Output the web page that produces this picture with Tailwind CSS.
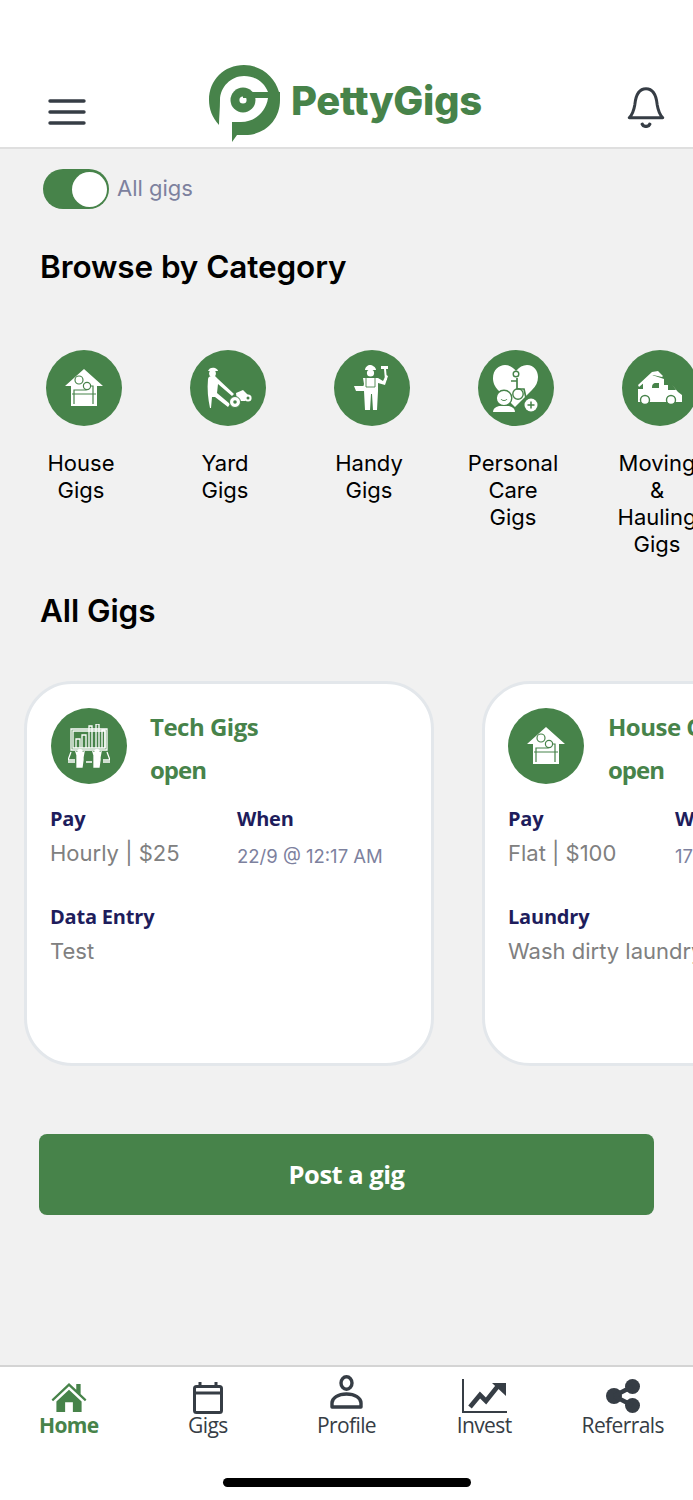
<!DOCTYPE html>
<html lang="en">
<head>
    <meta charset="UTF-8">
    <meta name="viewport" content="width=device-width, initial-scale=1.0">
    <title>PettyGigs</title>
    <script src="https://cdn.jsdelivr.net/npm/@tailwindcss/browser@4"></script>
</head>
<body class="bg-[#f1f1f1] font-['Inter',sans-serif]">
<div class="w-[693px] h-[1500px] flex flex-col overflow-hidden">

    <!-- Header -->
    <header class="h-[149px] shrink-0 bg-white border-b-2 border-[#dfdfdf] flex items-end pl-[48px] pb-[5px]">
        <svg class="w-[38px] h-[26px] mb-[17px]" viewBox="0 0 38 26" fill="none" stroke="#363d45" stroke-width="3.4" stroke-linecap="round"><path d="M2 2h34M2 13h34M2 24h34"/></svg>
        <div class="flex items-center ml-[123px] mb-0">
            <svg class="w-[71px] h-[77px]" viewBox="0 0 71 77">
                <path d="M10 60C3 52 0 44 0 35 0 15 15 0 35 0c17 0 31 12 35 27H59C55 17 46 11 35 11 22 11 11 22 11 35c0 9-1 17-1 25z" fill="#47834a"/>
                <circle cx="34" cy="35" r="12.500" fill="#47834a"/>
                <circle cx="34" cy="35" r="3.600" fill="#fff"/>
                <path d="M34 27h37v6H34z" fill="#47834a"/>
                <path d="M23 77V57h9c14 0 25-10 27-24h12v2c0 20-15 35-35 35h-8z" fill="#47834a"/>
            </svg>
            <span class="ml-[11px] font-extrabold text-[40px] leading-none tracking-[-0.4px] text-[#47834a] -mt-[5px]">PettyGigs</span>
        </div>
        <svg class="w-[38px] h-[41px] ml-[145px] mb-[14px]" viewBox="0 0 40 44" fill="none" stroke="#363d45" stroke-width="3.200" stroke-linejoin="round" stroke-linecap="round">
            <path d="M2 33h36c-4-4-5-8-6-14C31 9 28 2 20 2S9 9 8 19c-1 6-2 10-6 14z"/>
            <path d="M16 40c1 3 7 3 8 0" stroke-width="3.600"/>
        </svg>
    </header>

    <!-- All gigs toggle -->
    <div class="flex items-center gap-[8px] pl-[43px] pt-[20px] h-[60px]">
        <div class="w-[66px] h-[40px] rounded-full bg-[#47834a] flex items-center justify-end pr-[2px]">
            <div class="w-[35px] h-[35px] rounded-full bg-white"></div>
        </div>
        <span class="text-[22px] leading-none text-[#7d819e] -mt-[3px]">All gigs</span>
    </div>

    <h2 class="pl-[40px] mt-[40px] text-[31.5px] leading-[36px] font-semibold text-black tracking-[-0.1px]">Browse by Category</h2>

    <!-- Categories -->
    <div class="flex mt-[65px] pl-[19px] h-[218px] overflow-hidden">
        <div class="w-[144px] shrink-0 flex flex-col">
            <div class="w-[76px] h-[76px] ml-[27px] rounded-full bg-[#47834a] flex items-center justify-center">
                <svg class="w-[40px] h-[40px]" viewBox="0 0 40 40"><path d="M20 1 1 18h6v20h26V18h6z" fill="#fff"/><path d="M8 26h24M10 36V22h12v-4h7v18" fill="none" stroke="#47834a" stroke-width="1.200"/><circle cx="15" cy="12" r="4" fill="none" stroke="#47834a" stroke-width="1.200"/><circle cx="23" cy="18" r="3.600" fill="#fff" stroke="#47834a" stroke-width="1.200"/></svg>
            </div>
            <p class="w-[124px] mt-[24px] text-center text-[22px] leading-[27px] text-black">House<br>Gigs</p>
        </div>
        <div class="w-[144px] shrink-0 flex flex-col">
            <div class="w-[76px] h-[76px] ml-[27px] rounded-full bg-[#47834a] flex items-center justify-center">
                <svg class="w-[46px] h-[42px] ml-[2px]" viewBox="0 0 46 42" fill="#fff">
                    <path d="M2 4c1-3 4-4 7-3 2 1 3 2 3 3z"/><circle cx="6.500" cy="6.500" r="3.400"/>
                    <path d="M2 12c0-2 2-3 4-3h3l3 3 16 15-2 2-14-12-1 9 13 11-2 3-13-10-3 0-1 11H4C2 32 1 22 2 12z"/>
                    <path d="M30 26l7-3 5 5-3 6-8 0z"/>
                    <circle cx="29" cy="35" r="5.500" stroke="#47834a"/><circle cx="29" cy="35" r="1.800" fill="#47834a"/>
                    <circle cx="42" cy="31" r="3.600"/><circle cx="42" cy="31" r="1.500" fill="#47834a"/>
                </svg>
            </div>
            <p class="w-[124px] mt-[24px] text-center text-[22px] leading-[27px] text-black">Yard<br>Gigs</p>
        </div>
        <div class="w-[144px] shrink-0 flex flex-col">
            <div class="w-[76px] h-[76px] ml-[27px] rounded-full bg-[#47834a] flex items-center justify-center">
                <svg class="w-[36px] h-[48px]" viewBox="0 0 36 48" fill="#fff">
                    <path d="M11 6c0-3 3-5 5-5s6 2 6 5z"/><circle cx="16.500" cy="9" r="3.600"/>
                    <path d="M9 14h15l5 3 3-6 2 1-3 9-7-2v8l-1 19h-4l-1-16h-1l-1 16H11l-1-19H8l2-7z"/>
                    <path d="M0 22h14v5H2z"/>
                    <path d="M27 2h7v3h-2l1 11h-2l-1-11h-3z"/>
                    <path d="M12 14v9M21 14v9M12 23h9" fill="none" stroke="#47834a" stroke-width="0.900"/>
                </svg>
            </div>
            <p class="w-[124px] mt-[24px] text-center text-[22px] leading-[27px] text-black">Handy<br>Gigs</p>
        </div>
        <div class="w-[144px] shrink-0 flex flex-col">
            <div class="w-[76px] h-[76px] ml-[27px] rounded-full bg-[#47834a] flex items-center justify-center">
                <svg class="w-[46px] h-[47px]" viewBox="0 0 46 47">
                    <path d="M22 42 6 26C1 21 0 17 0 13 0 5 6 0 12 0c4 0 8 2 11 6 3-4 7-6 11-6 7 0 11 6 11 12 0 5-2 9-6 13z" fill="#fff"/>
                    <path d="M18 16h6v8h7l2 9M24 13v8" fill="none" stroke="#47834a" stroke-width="1.700"/><circle cx="23" cy="9" r="2.800" fill="none" stroke="#47834a" stroke-width="1.400"/><circle cx="25" cy="29" r="5.200" fill="none" stroke="#47834a" stroke-width="1.400"/>
                    <circle cx="11" cy="33" r="7.800" fill="#fff" stroke="#47834a" stroke-width="1.400"/>
                    <path d="M8 34c1 2 5 2 6 0" fill="none" stroke="#47834a" stroke-width="1"/>
                    <path d="M0 47c0-3 2-5 6-6h10c4 1 6 3 6 6z" fill="#fff"/>
                    <circle cx="38" cy="40" r="6.500" fill="#fff"/><path d="M38 36.500v7M34.500 40h7" stroke="#47834a" stroke-width="1.500"/>
                </svg>
            </div>
            <p class="w-[124px] mt-[24px] text-center text-[22px] leading-[27px] text-black">Personal<br>Care<br>Gigs</p>
        </div>
        <div class="w-[144px] shrink-0 flex flex-col">
            <div class="w-[76px] h-[76px] ml-[27px] rounded-full bg-[#47834a] flex items-center justify-center">
                <svg class="w-[44px] h-[34px] -ml-[1px]" viewBox="0 0 44 34">
                    <path d="M0 14 14 1l6-1 5 5-1 1-9-2L1 16z" fill="#fff"/>
                    <path d="M0 18h5V12L14 4l12 4v6h8l6 7 4 3v7H0z" fill="#fff"/>
                    <path d="M14 16c0-3 2-4 3-4l4 0v5h-7zM30 13h4l4 6h-8z" fill="#47834a"/>
                    <circle cx="7" cy="29" r="4.500" fill="#fff" stroke="#47834a" stroke-width="1.400"/><circle cx="33" cy="29" r="4.500" fill="#fff" stroke="#47834a" stroke-width="1.400"/>
                </svg>
            </div>
            <p class="w-[124px] mt-[24px] text-center text-[22px] leading-[27px] text-black">Moving<br>&amp;<br>Hauling<br>Gigs</p>
        </div>
    </div>

    <h2 class="pl-[40px] mt-[25px] text-[31.5px] leading-[36px] font-semibold text-black tracking-[-0.1px]">All Gigs</h2>

    <!-- Gig cards -->
    <div class="flex gap-[48px] mt-[52px] pl-[24px] overflow-hidden">
        <div class="w-[410px] h-[385px] shrink-0 bg-white rounded-[48px] border-[3px] border-[#e3e7eb] pl-[24px] pt-[24px]">
            <div class="flex">
                <div class="w-[76px] h-[76px] rounded-full bg-[#47834a] flex items-center justify-center">
                    <svg class="w-[42px] h-[44px]" viewBox="0 0 42 44" fill="none" stroke="#fff" stroke-width="1.300">
                        <path d="M3 5h36v21H3zM5 7h32v17H5z"/>
                        <path d="M8 24V15h4v9M14 24V11h4v13M21 24V2h3v22M28 24V0h3v24M34 24V6h3v18"/>
                        <path d="M3 28 0 36h7M39 28l3 8h-7M18 38h6M0 38h7M35 38h7"/>
                        <path d="M9 36v-5l-1-3 2 1v-3l1 2v-3l1 3 1-3v3l1-2v3l2-1-1 5v3l-1 7h-5z" fill="#fff"/>
                        <path d="M26 36v-5l-1-3 2 1v-3l1 2v-3l1 3 1-3v3l1-2v3l2-1-1 5v3l-1 7h-5z" fill="#fff"/>
                    </svg>
                </div>
                <div class="ml-[23px] -mt-[3px] font-['Open_Sans',sans-serif] font-bold text-[24px] leading-[43px] tracking-[-0.5px] text-[#47834a]">
                    <p>Tech Gigs</p>
                    <p class="tracking-[-1px]">open</p>
                </div>
            </div>
            <div class="flex mt-[11px] -ml-px">
                <div class="w-[187px]">
                    <p class="font-['Open_Sans',sans-serif] font-bold text-[20px] leading-[34px] tracking-[-0.2px] text-[#1e1d5c]">Pay</p>
                    <p class="text-[22px] leading-[34px] text-[#808080]">Hourly | $25</p>
                </div>
                <div>
                    <p class="font-['Open_Sans',sans-serif] font-bold text-[20px] leading-[34px] tracking-[-0.2px] text-[#1e1d5c]">When</p>
                    <p class="text-[18.500px] leading-[40px] text-[#7d819e]">22/9 @ 12:17 AM</p>
                </div>
            </div>
            <div class="mt-[24px] -ml-px">
                <p class="font-['Open_Sans',sans-serif] font-bold text-[20px] leading-[34px] tracking-[-0.2px] text-[#1e1d5c]">Data Entry</p>
                <p class="text-[22px] leading-[34px] text-[#808080]">Test</p>
            </div>
        </div>
        <div class="w-[410px] h-[385px] shrink-0 bg-white rounded-[48px] border-[3px] border-[#e3e7eb] pl-[23px] pt-[24px]">
            <div class="flex">
                <div class="w-[76px] h-[76px] rounded-full bg-[#47834a] flex items-center justify-center">
                    <svg class="w-[40px] h-[40px]" viewBox="0 0 40 40"><path d="M20 1 1 18h6v20h26V18h6z" fill="#fff"/><path d="M8 26h24M10 36V22h12v-4h7v18" fill="none" stroke="#47834a" stroke-width="1.200"/><circle cx="15" cy="12" r="4" fill="none" stroke="#47834a" stroke-width="1.200"/><circle cx="23" cy="18" r="3.600" fill="#fff" stroke="#47834a" stroke-width="1.200"/></svg>
                </div>
                <div class="ml-[24px] -mt-[3px] font-['Open_Sans',sans-serif] font-bold text-[24px] leading-[43px] tracking-[-0.5px] text-[#47834a]">
                    <p class="whitespace-nowrap">House Gigs</p>
                    <p class="tracking-[-1px]">open</p>
                </div>
            </div>
            <div class="flex mt-[11px]">
                <div class="w-[167px]">
                    <p class="font-['Open_Sans',sans-serif] font-bold text-[20px] leading-[34px] tracking-[-0.2px] text-[#1e1d5c]">Pay</p>
                    <p class="text-[22px] leading-[34px] text-[#808080]">Flat | $100</p>
                </div>
                <div>
                    <p class="font-['Open_Sans',sans-serif] font-bold text-[20px] leading-[34px] tracking-[-0.2px] text-[#1e1d5c]">When</p>
                    <p class="text-[18.500px] leading-[40px] text-[#7d819e]">17/9 @ 9:00 AM</p>
                </div>
            </div>
            <div class="mt-[24px]">
                <p class="font-['Open_Sans',sans-serif] font-bold text-[20px] leading-[34px] tracking-[-0.2px] text-[#1e1d5c]">Laundry</p>
                <p class="text-[22px] leading-[34px] text-[#808080] whitespace-nowrap">Wash dirty laundry</p>
            </div>
        </div>
    </div>

    <!-- Post a gig -->
    <div class="mt-[68px] mx-[39px] h-[81px] rounded-[8px] bg-[#47834a] flex items-center justify-center font-['Open_Sans',sans-serif] font-bold text-[25.500px] tracking-[-0.5px] text-white">Post a gig</div>

    <div class="flex-1"></div>

    <!-- Bottom nav -->
    <nav class="h-[135px] shrink-0 bg-white border-t-2 border-[#d4d4d4] relative font-['Open_Sans',sans-serif] text-[21px] leading-[24px] tracking-[-0.6px] text-[#363d45]">
        <div class="grid grid-cols-5 pt-[13px]">
            <div class="flex flex-col items-center text-[#47834a] font-bold -ml-[1px]">
                <svg class="w-[36px] h-[31px] mt-[2px]" viewBox="0 0 36 32" fill="#47834a">
                    <path d="M18 1 0 18l1.500 1.800L18 4.500l16.500 15.300L36 18l-6-5.700V2h-4.500v6z"/>
                    <path d="M5 20 18 8l13 12v11H22V21h-8v10H5z"/>
                </svg>
                <span class="mt-0">Home</span>
            </div>
            <div class="flex flex-col items-center">
                <svg class="w-[30px] h-[32px] mt-[2px]" viewBox="0 0 30 32" fill="none" stroke="#363d45" stroke-width="3" stroke-linejoin="round"><rect x="1.500" y="4.500" width="27" height="26" rx="2"/><path d="M1.500 11h27M7 0v4M23 0v4"/></svg>
                <span class="-mt-px">Gigs</span>
            </div>
            <div class="flex flex-col items-center -mt-[6px]">
                <svg class="w-[33px] h-[34px] mt-[1px]" viewBox="0 0 33 34" fill="none" stroke="#363d45" stroke-width="3.400" stroke-linejoin="round"><ellipse cx="16.500" cy="8" rx="5.500" ry="6.300"/><path d="M2 32v-4c0-5 6-9 14.500-9S31 23 31 28v4z"/></svg>
                <span class="mt-[4px]">Profile</span>
            </div>
            <div class="flex flex-col items-center -ml-[2px]">
                <svg class="w-[45px] h-[34px] -mt-[1px] mb-[1px]" viewBox="0 0 45 34" fill="none" stroke="#363d45">
                    <path d="M1 0v33h44" stroke-width="2"/>
                    <path d="M8 28 18 16l6 6 12-15" stroke-width="4.600"/>
                    <path d="M30 4h14v13z" fill="#363d45" stroke="none"/>
                </svg>
                <span class="-mt-px">Invest</span>
            </div>
            <div class="flex flex-col items-center -ml-[2px]">
                <svg class="w-[34px] h-[34px] -mt-[1px]" viewBox="0 0 34 34" fill="#363d45"><circle cx="26.500" cy="7.500" r="7.500"/><circle cx="8" cy="17" r="8"/><circle cx="26.500" cy="26.500" r="7.500"/><path d="M8 17 26.500 7.500M8 17 26.500 26.500" stroke="#363d45" stroke-width="4.500"/></svg>
                <span class="mt-0">Referrals</span>
            </div>
        </div>
        <div class="absolute left-[223px] top-[111px] w-[248px] h-[9px] rounded-full bg-black"></div>
    </nav>
</div>
</body>
</html>
